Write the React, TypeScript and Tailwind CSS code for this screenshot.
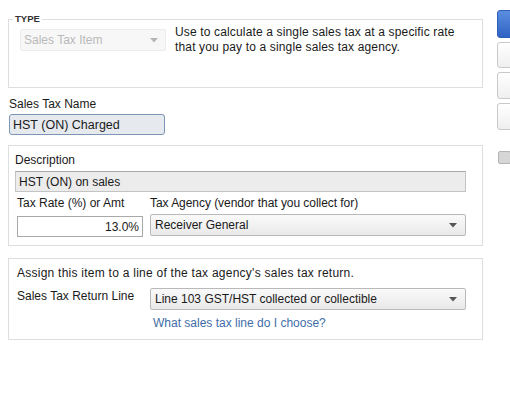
import React from 'react';

const Arrow = ({ color = '#555' }: { color?: string }) => (
  <svg width="8" height="5" viewBox="0 0 8 5" className="shrink-0">
    <path d="M0 0 L8 0 L4 4.5 Z" fill={color} />
  </svg>
);

const Select = ({ value, className = '' }: { value: string; className?: string }) => (
  <div
    className={`flex items-center justify-between h-[22px] pl-[4px] pr-[8px] border border-[#b9b9b9] rounded-[2px] bg-gradient-to-b from-[#fafafa] to-[#e9e9e9] text-[12px] text-[#1a1a1a] ${className}`}
  >
    <span>{value}</span>
    <Arrow />
  </div>
);

const App: React.FC = () => {
  return (
    <div
      className="flex w-[510px] h-[398px] overflow-hidden bg-white text-[12px] leading-[14px] text-[#1a1a1a]"
      style={{ fontFamily: '"Liberation Sans", Arial, sans-serif' }}
    >
      <div className="ml-[8px] w-[475px] shrink-0 flex flex-col">
        {/* type */}
        <fieldset className="mt-[12px] border border-[#dedede] px-[4px] pb-[32px] pt-0">
          <legend className="px-[2px] text-[9.5px] font-bold leading-[14px] text-[#333]">TYPE</legend>
          <div className="flex pl-[7px] pt-[3px]">
            <div className="flex items-center justify-between w-[146px] h-[22px] pl-[3px] pr-[7px] border border-[#ececec] rounded-[2px] bg-[#f7f7f7] text-[#b9b9b9] text-[12px]">
              <span>Sales Tax Item</span>
              <Arrow color="#b5b5b5" />
            </div>
            <p className="ml-[9px] -mt-[4px] leading-[15px] text-[12px] tracking-[0.15px]">
              Use to calculate a single sales tax at a specific rate
              <br />
              that you pay to a single sales tax agency.
            </p>
          </div>
        </fieldset>

        {/* name */}
        <div className="mt-[9px] pl-[1px]">
          <div className="leading-[14px]">Sales Tax Name</div>
          <div className="mt-[3px] w-[156px] h-[21px] flex items-center pl-[3px] border border-[#7c96b8] rounded-[3px] bg-[#e6eaef] text-[12.5px]">
            HST (ON) Charged
          </div>
        </div>

        {/* description box */}
        <div className="mt-[10px] border border-[#dedede] pl-[6px] pr-[16px] pt-[7px] pb-[8px]">
          <div>Description</div>
          <div className="mt-[4px] h-[21px] flex items-center pl-[3px] border border-[#c4c4c4] border-t-[#a9a9a9] bg-[#ececec]">
            HST (ON) on sales
          </div>
          <div className="flex mt-[4px] pl-[2px]">
            <div className="w-[126px] flex flex-col">
              <div>Tax Rate (%) or Amt</div>
              <div className="mt-[6px] h-[21px] flex items-center justify-end pr-[3px] border border-[#a9a9a9] bg-white">
                13.0%
              </div>
            </div>
            <div className="ml-[7px] flex-1 flex flex-col">
              <div className="tracking-[-0.05px]">Tax Agency (vendor that you collect for)</div>
              <Select value="Receiver General" className="mt-[4px]" />
            </div>
          </div>
        </div>

        {/* return line box */}
        <div className="mt-[12px] border border-[#dedede] pl-[8px] pr-[16px] pt-[7px] pb-[9px]">
          <div className="tracking-[0.25px]">Assign this item to a line of the tax agency's sales tax return.</div>
          <div className="flex mt-[8px]">
            <div className="w-[133px] pt-[1px]">Sales Tax Return Line</div>
            <div className="flex-1 flex flex-col">
              <Select value="Line 103 GST/HST collected or collectible" className="h-[21px]" />
              <div className="mt-[6px] pl-[3px] text-[#3f6ea8]">What sales tax line do I choose?</div>
            </div>
          </div>
        </div>
      </div>

      {/* buttons */}
      <div className="ml-[14px] pt-[10px] flex flex-col gap-[4px] shrink-0">
        <div className="w-[80px] h-[28px] rounded-[3px] border border-[#2f5fb8] bg-gradient-to-b from-[#5b8ee0] to-[#2f63c4]" />
        <div className="w-[80px] h-[26px] rounded-[3px] border border-[#c9c9c9] bg-gradient-to-b from-white to-[#efefef]" />
        <div className="w-[80px] h-[27px] rounded-[3px] border border-[#c9c9c9] bg-gradient-to-b from-white to-[#efefef]" />
        <div className="w-[80px] h-[27px] rounded-[3px] border border-[#c9c9c9] bg-gradient-to-b from-white to-[#efefef]" />
        <div className="mt-[17px] w-[13px] h-[13px] ml-[1px] rounded-[2px] border border-[#b3b3b3] bg-[#d6d6d6]" />
      </div>
    </div>
  );
};

export default App;
